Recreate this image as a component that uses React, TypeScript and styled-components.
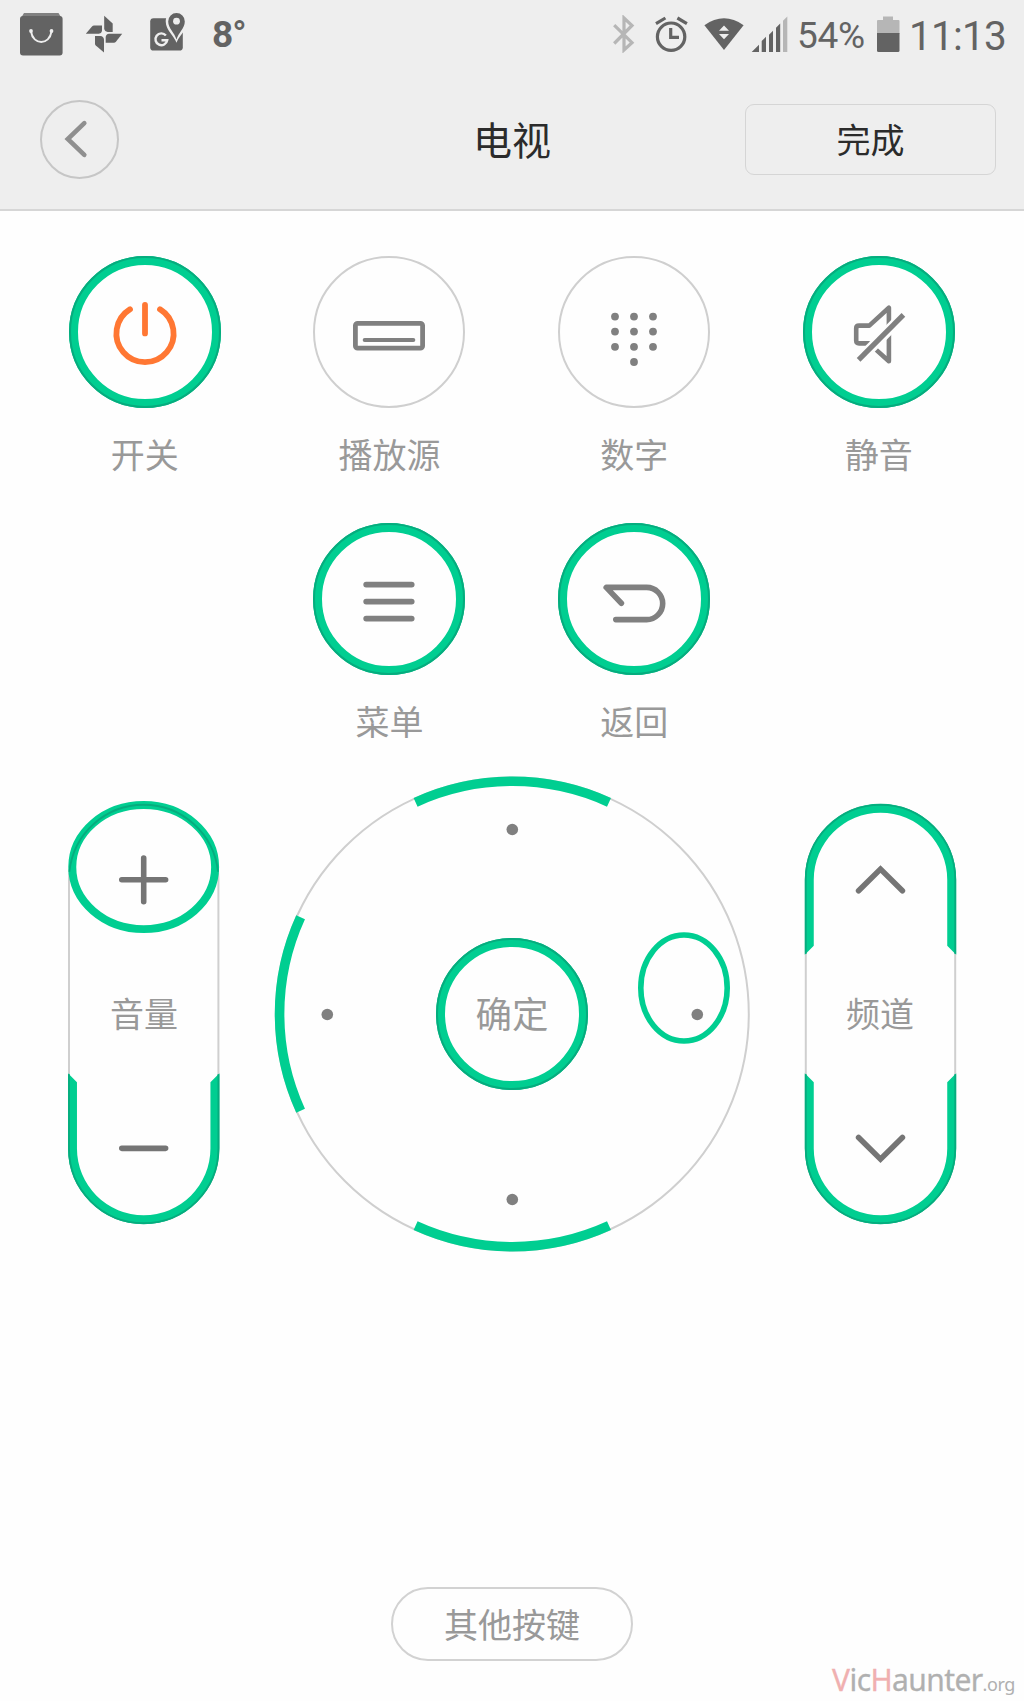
import React from "react";
import styled, { createGlobalStyle } from "styled-components";

const GREEN = "#00ce91";
const GREEN_DARK = "#06ac7e";
const INK = "#808080";
const LINE = "#cfcfcf";
const STATUS = "#636363";
const STATUS_DIM = "#b6b6b6";

const Global = createGlobalStyle`
  * { box-sizing: border-box; }
  body { margin: 0; background: #fefefe; }
  button { font: inherit; color: inherit; background: none; border: 0; padding: 0; margin: 0; }
  svg { display: block; }
`;

const Screen = styled.main`
  width: 1024px;
  height: 1701px;
  display: flex;
  flex-direction: column;
  overflow: hidden;
  background: #fefefe;
  color: #999;
  font-family: "Noto Sans CJK SC", sans-serif;
`;

const Top = styled.header`
  height: 211px;
  flex: none;
  background: #eee;
  border-bottom: 2px solid #d6d6d6;
`;

const StatusBar = styled.div`
  height: 70px;
  display: flex;
  justify-content: space-between;
  padding: 0 18px 0 20px;
  color: ${STATUS};
`;

const StatusGroup = styled.div`
  display: flex;
  align-items: flex-start;
`;

const StatusIcon = styled.svg<{ $top: number; $right: number }>`
  flex: none;
  margin-top: ${(p) => p.$top}px;
  margin-right: ${(p) => p.$right}px;
`;

const Temperature = styled.span`
  font: 700 37px/40px Roboto, sans-serif;
  letter-spacing: -1px;
  margin-top: 15px;
`;

const StatusText = styled.span<{ $size: number; $top: number; $width: number; $spacing?: number }>`
  font: 400 ${(p) => p.$size}px/40px Roboto, sans-serif;
  letter-spacing: ${(p) => p.$spacing ?? 0}px;
  margin-top: ${(p) => p.$top}px;
  width: ${(p) => p.$width}px;
  white-space: nowrap;
`;

const TitleBar = styled.div`
  height: 139px;
  display: grid;
  grid-template-columns: 251px 1fr 251px;
  align-items: center;
  padding: 0 28px 0 40px;
`;

const BackButton = styled.button`
  width: 79px;
  height: 79px;
  border: 2px solid #c6c6c6;
  border-radius: 50%;
`;

const Title = styled.h1`
  margin: 0 0 3px;
  padding-right: 12px;
  text-align: center;
  font-size: 39px;
  line-height: 56px;
  font-weight: 400;
  color: #2b2b2b;
`;

const DoneButton = styled.button`
  height: 71px;
  border: 1.5px solid #d5d5d5;
  border-radius: 9px;
  padding-bottom: 2px;
  font-size: 34px;
  line-height: 50px;
  color: #2b2b2b;
`;

const KeyGrid = styled.section`
  display: grid;
  grid-template-columns: repeat(4, 152px);
  justify-content: space-between;
  row-gap: 43px;
  padding: 45px 69.2px 0 68.8px;
  height: 565px;
  flex: none;
  align-content: start;
`;

const Key = styled.div<{ $column?: number }>`
  display: flex;
  flex-direction: column;
  align-items: center;
  gap: 21px;
  height: 224px;
  ${(p) => (p.$column ? `grid-column: ${p.$column};` : "")}
`;

const RoundButton = styled.button<{ $marked?: boolean }>`
  position: relative;
  width: 152px;
  height: 152px;
  flex: none;
  border-radius: 50%;
  border: ${(p) => (p.$marked ? `9px solid ${GREEN}` : `2px solid ${LINE}`)};
  display: flex;
  align-items: center;
  justify-content: center;

  &::before {
    content: "";
    display: ${(p) => (p.$marked ? "block" : "none")};
    position: absolute;
    inset: -9px;
    border: 2px solid ${GREEN_DARK};
    border-radius: 50%;
  }
`;

const Label = styled.span`
  font-size: 34px;
  line-height: 50px;
  white-space: nowrap;
`;

const Controls = styled.section`
  display: flex;
  justify-content: space-between;
  align-items: center;
  padding: 0 68px;
  height: 476px;
  flex: none;
`;

const Rocker = styled.div`
  position: relative;
  width: 152px;
  height: 422px;
  padding-bottom: 2px;
  display: flex;
  flex-direction: column;
  align-items: center;
  justify-content: center;
`;

const RockerArt = styled.svg`
  position: absolute;
  inset: 0;
  overflow: visible;
`;

const Dial = styled.div`
  position: relative;
  width: 476px;
  height: 476px;
  display: flex;
  align-items: center;
  justify-content: center;
`;

const DialArt = styled.svg`
  position: absolute;
  inset: 0;
`;

const ConfirmLabel = styled.span`
  font-size: 36.5px;
  line-height: 54px;
  padding-bottom: 2px;
  white-space: nowrap;
`;

const Footer = styled.footer`
  flex: 1;
  position: relative;
  display: flex;
  justify-content: center;
  align-items: flex-end;
  padding-bottom: 40px;
`;

const OtherKeys = styled.button`
  width: 242px;
  height: 74px;
  border: 2px solid #d2d2d2;
  border-radius: 37px;
  font-size: 34px;
  line-height: 50px;
`;

const Watermark = styled.div`
  position: absolute;
  right: 9px;
  bottom: -1px;
  font: 400 30px/36px "Noto Sans", sans-serif;
  letter-spacing: -0.6px;
  color: #b0b0b0;
  -webkit-text-stroke: 0.3px;
  white-space: nowrap;
`;

const Accent = styled.span`
  color: #f0b0b0;
`;

const Suffix = styled.span`
  font-size: 18px;
  letter-spacing: -0.4px;
  -webkit-text-stroke: 0;
`;

const KeyIcon = ({ children, color = INK, width = 5.6 }: { children: React.ReactNode; color?: string; width?: number }) => (
  <svg width="100" height="100" viewBox="-50 -49.6 100 100" fill="none" stroke={color} strokeWidth={width} strokeLinecap="round" strokeLinejoin="round">
    {children}
  </svg>
);

const PowerIcon = () => (
  <KeyIcon color="#ff7733" width={5.8}>
    <path d="M-15-22.4A28.6 28.6 0 1 0 15-22.4M0-26.8V1.8" />
  </KeyIcon>
);

const SourceIcon = () => (
  <KeyIcon width={4.8}>
    <rect x="-33.6" y="-8.2" width="67.2" height="24.8" rx="2.2" />
    <path d="M-24.4 8.4H24.4" strokeWidth="3.8" />
  </KeyIcon>
);

const DigitsIcon = () => (
  <KeyIcon>
    {[[-19, -15], [0, -15], [19, -15], [-19, 0], [0, 0], [19, 0], [-19, 15.2], [0, 15.2], [19, 15.2], [0, 30.4]].map(([x, y]) => (
      <circle key={`${x},${y}`} cx={x} cy={y} r="3.9" fill={INK} stroke="none" />
    ))}
  </KeyIcon>
);

const MuteIcon = () => (
  <KeyIcon width={4.6}>
    <path d="M-20-6H-9.7L9.9-23.8V29.6L-10 11.8H-20Q-22.8 11.8-22.8 9V-3.2Q-22.8-6-20-6Z" />
    <path d="M-22 30.3L27.7-19.7" stroke="#fefefe" strokeWidth="10.6" strokeLinecap="butt" />
    <path d="M-20.4 28.2L24.4-16.8" strokeLinecap="butt" strokeWidth="5.2" />
  </KeyIcon>
);

const MenuIcon = () => (
  <KeyIcon width={5.8}>
    <path d="M-22.8-14H22.7M-22.8 3H22.7M-22.8 20H22.7" />
  </KeyIcon>
);

const ReturnIcon = () => (
  <KeyIcon>
    <path d="M-12.6 4.6L-27.8-11.2H12.6A16.1 16.1 0 0 1 12.6 21H-18.2" />
  </KeyIcon>
);

/* Bottom cap of a rocker: a green band with a dark outer edge. */
const RockerCap = ({ flip = false }: { flip?: boolean }) => (
  <g transform={flip ? "translate(0 422) scale(1 -1)" : undefined}>
    <path d="M0 270.500V346A76 76 0 0 0 152 346V270.500L143 279.500V346A67 67 0 0 1 9 346V279.500Z" fill={GREEN} />
    <path d="M1 271.500V346A75 75 0 0 0 151 346V271.500" fill="none" stroke={GREEN_DARK} strokeWidth="1.8" />
  </g>
);

const RockerFrame = () => (
  <rect x="1" y="1" width="150" height="420" rx="75" fill="none" stroke={LINE} strokeWidth="2" />
);

const dialDots = [[238, 53.5], [53, 238.5], [423, 238.5], [238, 423.5]];

function App() {
  return (
    <Screen>
      <Global />
      <Top>
        <StatusBar>
          <StatusGroup>
            <StatusIcon $top={13} $right={23} width="43" height="43" viewBox="20 13 43 43">
              <path d="M24 13H58.5L61.5 18H21Z" fill="#808080" />
              <rect x="20" y="16" width="42.6" height="39.4" rx="3" fill={STATUS} />
              <path d="M31 31.5C33 45.5 49.5 45.5 51.5 31.5" fill="none" stroke="#eee" strokeWidth="1.9" />
              <circle cx="31" cy="31" r="1.9" fill="#eee" />
              <circle cx="51.5" cy="31" r="1.9" fill="#eee" />
            </StatusIcon>
            <StatusIcon $top={15} $right={27} width="37" height="38" viewBox="86 15 37 38" fill={STATUS}>
              <path d="M104.2 15.7L112.7 23.4V32H107.6Q104.7 31.8 104.2 28.6Z" />
              <path d="M85.7 33.8L92 26.4Q92.8 25.4 94 25.4H102V31Q101.6 33.6 98.8 33.8Z" />
              <path d="M122.2 33.8H109Q106 34.2 105.7 37V42.8H114Q115 42.8 115.7 42Z" />
              <path d="M95 36H100.3Q103.5 36.3 104 39.2V52.4L95.8 45.5Q95 44.8 95 43.8Z" />
            </StatusIcon>
            <StatusIcon $top={12} $right={27} width="35" height="39" viewBox="149.8 11.8 35 39">
              <rect x="150" y="18" width="32.6" height="32.4" rx="3.4" fill={STATUS} />
              <path d="M176.3 42.5C174 35.5 165.500 30 165.500 21A10.8 10.8 0 0 1 187.100 21C187.100 30 178.600 35.500 176.3 42.500Z" fill="#eee" />
              <path d="M176.300 39.300C174.500 32.500 168 28 168 21.200A8.300 8.300 0 0 1 184.600 21.200C184.600 28 178.100 32.500 176.300 39.300Z" fill={STATUS} />
              <circle cx="176.300" cy="21" r="3.400" fill="#eee" />
              <path d="M165.700 35.300A5.900 5.900 0 1 0 167 40.100H161.300" fill="none" stroke="#eee" strokeWidth="2.400" />
            </StatusIcon>
            <Temperature>8°</Temperature>
          </StatusGroup>
          <StatusGroup>
            <StatusIcon $top={15} $right={20} width="22" height="38" viewBox="613 15 22 38">
              <path d="M614.200 25.200L632 42.700L624 50V18L632 25.500L614.200 43.500" fill="none" stroke={STATUS_DIM} strokeWidth="3.200" />
            </StatusIcon>
            <StatusIcon $top={15} $right={16} width="33" height="38" viewBox="655 15 33 38" fill="none" stroke={STATUS} strokeWidth="3.200">
              <circle cx="671.100" cy="36.700" r="13.700" />
              <path d="M656 23.600L665.400 18M677.400 18L686.900 23.600M670.700 28V37.300H679" />
            </StatusIcon>
            <StatusIcon $top={15} $right={7} width="40" height="38" viewBox="704 15 40 38">
              <path d="M724 50L704.400 25.200Q724 11.500 743.600 25.200Z" fill={STATUS} />
              <path d="M724 25.400L729 30.700H719ZM719 34H729L724 39.200Z" fill="#eee" />
            </StatusIcon>
            <StatusIcon $top={15} $right={9} width="37" height="38" viewBox="751 15 37 38" fill={STATUS}>
              <path d="M751.700 52L759 44.700V52ZM761.700 52V41L766 36.700V52ZM769 52V34.700L773 30.700V52ZM776 52V27.700L780.200 23.500V52Z" />
              <path d="M783 52V20.700L787.300 16.400V52Z" fill={STATUS_DIM} />
            </StatusIcon>
            <StatusText $size={37} $top={16} $width={80} $spacing={-0.3}>54%</StatusText>
            <StatusIcon $top={16} $right={9} width="23" height="37" viewBox="877 16 23 37">
              <path d="M877 34V21Q877 20 878 20H883V16.500H893V20H898.500Q899.500 20 899.500 21V34Z" fill={STATUS_DIM} />
              <path d="M877 33H899.500V50.500Q899.500 52 898 52H878.500Q877 52 877 50.500Z" fill={STATUS} />
            </StatusIcon>
            <StatusText $size={40.5} $top={16} $width={97} $spacing={-0.8}>11:13</StatusText>
          </StatusGroup>
        </StatusBar>
        <TitleBar>
          <BackButton aria-label="back">
            <svg width="75" height="75" viewBox="42 102 75 75" fill="none" stroke="#8f8f8f" strokeWidth="4.600" strokeLinecap="round">
              <path d="M84.300 123.200L67.800 139L84.300 154.800" />
            </svg>
          </BackButton>
          <Title>电视</Title>
          <DoneButton>完成</DoneButton>
        </TitleBar>
      </Top>

      <KeyGrid>
        <Key><RoundButton $marked><PowerIcon /></RoundButton><Label>开关</Label></Key>
        <Key><RoundButton><SourceIcon /></RoundButton><Label>播放源</Label></Key>
        <Key><RoundButton><DigitsIcon /></RoundButton><Label>数字</Label></Key>
        <Key><RoundButton $marked><MuteIcon /></RoundButton><Label>静音</Label></Key>
        <Key $column={2}><RoundButton $marked><MenuIcon /></RoundButton><Label>菜单</Label></Key>
        <Key $column={3}><RoundButton $marked><ReturnIcon /></RoundButton><Label>返回</Label></Key>
      </KeyGrid>

      <Controls>
        <Rocker>
          <RockerArt width="152" height="422" viewBox="0 -0.5 152.6 423">
            <RockerFrame />
            <RockerCap />
            <ellipse cx="76" cy="63.500" rx="71.700" ry="62.300" fill="none" stroke={GREEN} strokeWidth="8" />
            <path d="M1.400 68.200A75 75 0 0 1 150.600 68.200" fill="none" stroke={GREEN_DARK} strokeWidth="1.800" />
            <path d="M54 76.300H98M76 54.300V98.300M54 345.900H98" stroke="#757575" strokeWidth="5.600" strokeLinecap="round" />
          </RockerArt>
          <Label>音量</Label>
        </Rocker>

        <Dial>
          <DialArt width="476" height="476" viewBox="-0.3 0 476 476" fill="none">
            <circle cx="238" cy="238" r="236.500" stroke={LINE} strokeWidth="2" />
            <g stroke={GREEN} strokeWidth="9.600">
              {[0, 180, 270].map((turn) => (
                <path key={turn} d="M141.300 26.300A232.800 232.800 0 0 1 334.700 26.300" transform={`rotate(${turn} 238 238)`} />
              ))}
            </g>
            <ellipse cx="409.700" cy="212" rx="43.200" ry="53" stroke={GREEN} strokeWidth="5.600" />
            {dialDots.map(([x, y]) => (
              <circle key={`${x},${y}`} cx={x} cy={y} r="5.800" fill={INK} />
            ))}
          </DialArt>
          <RoundButton $marked><ConfirmLabel>确定</ConfirmLabel></RoundButton>
        </Dial>

        <Rocker>
          <RockerArt width="152" height="422" viewBox="-0.8 -0.5 152.6 423">
            <RockerFrame />
            <RockerCap />
            <RockerCap flip />
            <path d="M54 87.300L76 65.500L98 87.300M54 334.900L76 356.700L98 334.900" fill="none" stroke="#757575" strokeWidth="5.600" strokeLinecap="round" />
          </RockerArt>
          <Label>频道</Label>
        </Rocker>
      </Controls>

      <Footer>
        <OtherKeys>其他按键</OtherKeys>
        <Watermark>
          <Accent>V</Accent>ic<Accent>H</Accent>aunter<Suffix>.org</Suffix>
        </Watermark>
      </Footer>
    </Screen>
  );
}

export default App;
